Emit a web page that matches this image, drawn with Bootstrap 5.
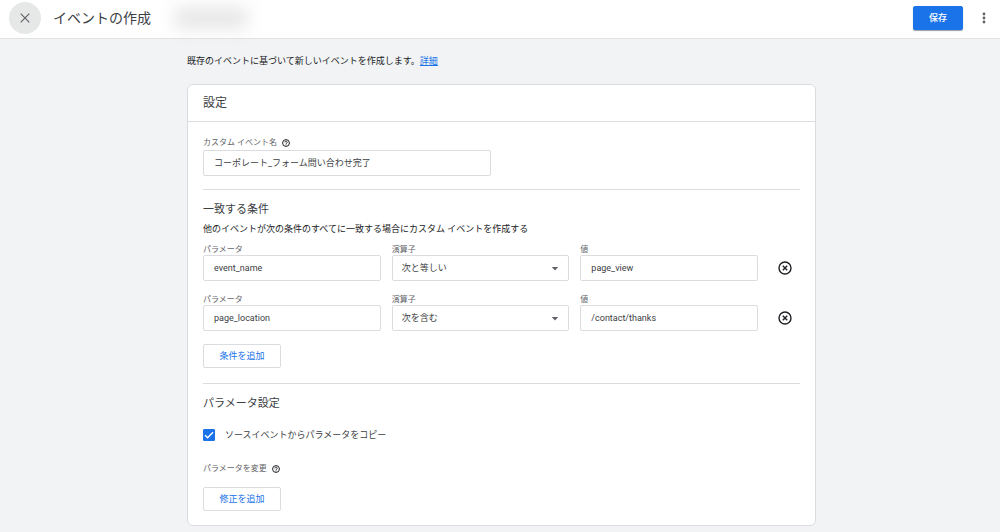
<!DOCTYPE html>
<html lang="ja">
<head>
<meta charset="utf-8">
<meta name="viewport" content="width=device-width, initial-scale=1">
<title>イベントの作成</title>
<link href="https://cdn.jsdelivr.net/npm/bootstrap@5.3.0/dist/css/bootstrap.min.css" rel="stylesheet">
<style>
body { background: #f1f3f4; color: #3c4043; font-family: Roboto, "Noto Sans CJK JP", sans-serif; font-size: 9px; line-height: 14px; }
.topbar { height: 39px; border-bottom: 1px solid #dfe1e5; padding: 0 8px 2px 9px; }
.page-title { font-size: 14px; line-height: 20px; color: #3c4043; font-weight: 400; }
.close-btn { width: 32px; height: 32px; background: #e6e8e8; color: #5f6368; }
.account-blur { width: 72px; height: 20px; background: #e4e4e4; filter: blur(9px); }
.save-btn { width: 50px; height: 24px; font-size: 9px; line-height: 14px; font-weight: 500; border-radius: 2px; --bs-btn-bg: #1a73e8; --bs-btn-border-color: #1a73e8; box-shadow: 0 1px 1px #9aa0a6; }
.more-btn { width: 16px; height: 24px; margin-left: 13px; color: #5f6368; }
.page-main { padding: 15px 0 5px 3px; }
.page-column { max-width: 629px; }
.intro a { color: #1a73e8; }
.settings-card { border: 1px solid #dadce0; border-radius: 6px; }
.settings-card .card-header { padding: 8px 15px; background: #fff; border-color: #dadce0; border-radius: 6px 6px 0 0; }
.settings-card .card-body { padding: 14px 15px; }
.head-lg { font-size: 12px; line-height: 20px; font-weight: 400; }
.head-md { font-size: 11px; line-height: 18px; font-weight: 400; margin: 11px 0 0; }
.field-label { font-size: 8px; line-height: 10px; color: #5f6368; }
.label-row { gap: 5px; }
.name-row { height: 14px; }
.form-control, .form-select { height: 26px; padding: 0 10px 1px; font-size: 9px; line-height: 14px; color: #3c4043; border-color: #dadce0; border-radius: 2px; }
.form-select { padding: 0 9px 1px; background-image: url("data:image/svg+xml,%3Csvg xmlns='http://www.w3.org/2000/svg' viewBox='0 0 8 4'%3E%3Cpath fill='%235f6368' d='M0.8 0h6.4L4 3.6z'/%3E%3C/svg%3E"); background-size: 8px 4px; background-position: right 9px top 11px; }
.name-field { max-width: 288px; }
.rule { margin: 13px 0 0; border-color: #dadce0; opacity: 1; }
.rule-wide { margin-top: 15px; }
.intro, .description { color: #202124; }
.description { margin: 3px 0 9px; }
.condition-grid { display: grid; grid-template-columns: repeat(3, minmax(0, 1fr)) 31px; column-gap: 11px; align-items: end; }
.condition-grid + .condition-grid { margin-top: 14px; }
.remove-btn { height: 26px; color: #202124; }
.add-btn { width: 78px; height: 24px; margin-top: 13px; padding: 0; font-size: 9px; line-height: 14px; border-radius: 2px; --bs-btn-color: #1a73e8; --bs-btn-border-color: #dadce0; --bs-btn-hover-color: #1a73e8; --bs-btn-hover-bg: #f1f6fe; }
.copy-row { margin-top: 15px; gap: 10px; }
.copy-row + .label-row { margin-top: 22px; }
.form-check-input { width: 12px; height: 12px; }
.form-check-input[type=checkbox] { border-radius: 1px; }
.form-check-input:checked[type=checkbox] { background-color: #1a73e8; border-color: #1a73e8; background-image: url("data:image/svg+xml,%3Csvg xmlns='http://www.w3.org/2000/svg' viewBox='0 0 10 10'%3E%3Cpath fill='none' stroke='%23fff' stroke-width='1.4' d='M1 5.200l2.600 2.600L9 2.200'/%3E%3C/svg%3E"); }
</style>
</head>
<body>
<header class="topbar bg-white d-flex align-items-center">
  <button type="button" class="close-btn btn p-0 border-0 rounded-circle d-flex align-items-center justify-content-center" aria-label="閉じる">
    <svg width="10" height="10" viewBox="0 0 10 10" stroke="currentColor" stroke-width="1.2"><path d="M.7.7l8.6 8.6M9.3.7L.7 9.3"/></svg>
  </button>
  <h1 class="page-title mb-0 ms-2 ps-1">イベントの作成</h1>
  <div class="account-blur ms-4" aria-hidden="true"></div>
  <button type="button" class="save-btn btn btn-primary p-0 ms-auto">保存</button>
  <button type="button" class="more-btn btn p-0 border-0 d-flex align-items-center justify-content-center" aria-label="その他">
    <svg width="4" height="12" viewBox="0 0 4 12" fill="currentColor"><circle cx="2" cy="2" r="1.4"/><circle cx="2" cy="6" r="1.4"/><circle cx="2" cy="10" r="1.4"/></svg>
  </button>
</header>

<main class="page-main">
  <div class="page-column mx-auto">
    <p class="intro mb-3">既存のイベントに基づいて新しいイベントを作成します。<a href="#">詳細</a></p>
    <section class="settings-card card">
      <div class="card-header"><h2 class="head-lg mb-0">設定</h2></div>
      <div class="card-body">
        <div class="label-row name-row d-flex align-items-center">
          <label class="field-label" for="eventName">カスタム イベント名</label>
          <svg width="8" height="8" viewBox="0 0 24 24" fill="none" stroke="#202124" stroke-width="3"><circle cx="12" cy="12" r="10.3"/><path d="M8.500 10a3.500 3.500 0 1 1 5.500 2.700c-1.300.9-2 1.300-2 2.600M12 16.500v2.500"/></svg>
        </div>
        <input id="eventName" class="form-control name-field" type="text" value="コーポレート_フォーム問い合わせ完了">
        <hr class="rule">
        <h3 class="head-md">一致する条件</h3>
        <p class="description">他のイベントが次の条件のすべてに一致する場合にカスタム イベントを作成する</p>

        <div class="condition-grid">
          <div><label class="field-label d-block" for="param1">パラメータ</label><input id="param1" class="form-control" type="text" value="event_name"></div>
          <div><label class="field-label d-block" for="op1">演算子</label><select id="op1" class="form-select"><option>次と等しい</option><option>次を含む</option></select></div>
          <div><label class="field-label d-block" for="val1">値</label><input id="val1" class="form-control" type="text" value="page_view"></div>
          <button type="button" class="remove-btn btn p-0 border-0 d-flex align-items-center justify-content-center" aria-label="条件を削除">
            <svg width="14" height="14" viewBox="0 0 14 14" fill="none" stroke="currentColor" stroke-width="1.4"><circle cx="7" cy="7" r="6"/><path d="M4.800 4.800l4.400 4.400M9.200 4.800L4.800 9.200"/></svg>
          </button>
        </div>
        <div class="condition-grid">
          <div><label class="field-label d-block" for="param2">パラメータ</label><input id="param2" class="form-control" type="text" value="page_location"></div>
          <div><label class="field-label d-block" for="op2">演算子</label><select id="op2" class="form-select"><option>次を含む</option><option>次と等しい</option></select></div>
          <div><label class="field-label d-block" for="val2">値</label><input id="val2" class="form-control" type="text" value="/contact/thanks"></div>
          <button type="button" class="remove-btn btn p-0 border-0 d-flex align-items-center justify-content-center" aria-label="条件を削除">
            <svg width="14" height="14" viewBox="0 0 14 14" fill="none" stroke="currentColor" stroke-width="1.4"><circle cx="7" cy="7" r="6"/><path d="M4.800 4.800l4.400 4.400M9.200 4.800L4.800 9.200"/></svg>
          </button>
        </div>
        <button type="button" class="add-btn btn d-block">条件を追加</button>
        <hr class="rule rule-wide">
        <h3 class="head-md">パラメータ設定</h3>
        <div class="copy-row d-flex align-items-center">
          <input class="form-check-input m-0" type="checkbox" id="copyParams" checked>
          <label for="copyParams">ソースイベントからパラメータをコピー</label>
        </div>
        <div class="label-row d-flex align-items-center">
          <span class="field-label">パラメータを変更</span>
          <svg width="8" height="8" viewBox="0 0 24 24" fill="none" stroke="#202124" stroke-width="3"><circle cx="12" cy="12" r="10.3"/><path d="M8.500 10a3.500 3.500 0 1 1 5.500 2.700c-1.300.9-2 1.300-2 2.600M12 16.500v2.500"/></svg>
        </div>
        <button type="button" class="add-btn btn d-block">修正を追加</button>
      </div>
    </section>
  </div>
</main>
<script src="https://cdn.jsdelivr.net/npm/bootstrap@5.3.0/dist/js/bootstrap.bundle.min.js"></script>
</body>
</html>
